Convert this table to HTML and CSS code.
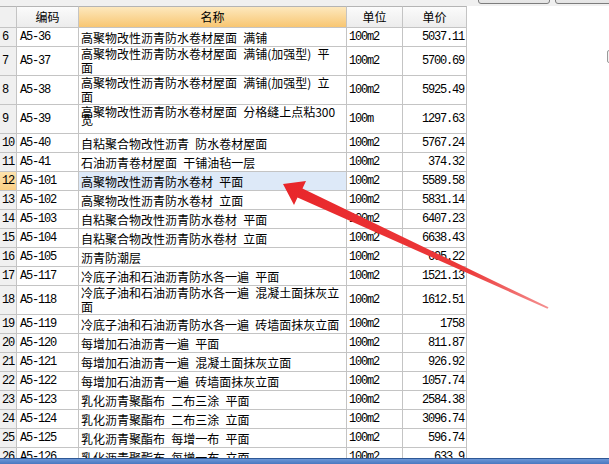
FILE: index.html
```html
<!DOCTYPE html>
<html lang="zh-CN">
<head>
<meta charset="utf-8">
<title>定额列表</title>
<link rel="stylesheet" href="styles.css">
</head>
<body>
<div class="topbar">
  <div class="tbtn"></div>
  <div class="tbtn wide"></div>
</div>
<div class="main">
  <div class="grid">
    <div class="h num"></div>
    <div class="h">编码</div>
    <div class="h sel">名称</div>
    <div class="h">单位</div>
    <div class="h">单价</div>

    <div class="c num m">6</div><div class="c code m">A5-36</div><div class="c name">高聚物改性沥青防水卷材屋面 满铺</div><div class="c unit m">100m2</div><div class="c price m">5037.11</div>

    <div class="c num m t2">7</div><div class="c code m t2">A5-37</div><div class="c name t2"><span class="ln">高聚物改性沥青防水卷材屋面 满铺(加强型) 平</span><span class="ln">面</span></div><div class="c unit m t2">100m2</div><div class="c price m t2">5700.69</div>

    <div class="c num m t2">8</div><div class="c code m t2">A5-38</div><div class="c name t2"><span class="ln">高聚物改性沥青防水卷材屋面 满铺(加强型) 立</span><span class="ln">面</span></div><div class="c unit m t2">100m2</div><div class="c price m t2">5925.49</div>

    <div class="c num m t2">9</div><div class="c code m t2">A5-39</div><div class="c name t2 top"><span class="ln tight">高聚物改性沥青防水卷材屋面 分格缝上点粘300</span><span class="ln tight">宽</span></div><div class="c unit m t2">100m</div><div class="c price m t2">1297.63</div>

    <div class="c num m">10</div><div class="c code m">A5-40</div><div class="c name">自粘聚合物改性沥青 防水卷材屋面</div><div class="c unit m">100m2</div><div class="c price m">5767.24</div>

    <div class="c num m">11</div><div class="c code m">A5-41</div><div class="c name">石油沥青卷材屋面 干铺油毡一层</div><div class="c unit m">100m2</div><div class="c price m">374.32</div>

    <div class="c num m cur">12</div><div class="c code m">A5-101</div><div class="c name active">高聚物改性沥青防水卷材 平面</div><div class="c unit m">100m2</div><div class="c price m">5589.58</div>

    <div class="c num m">13</div><div class="c code m">A5-102</div><div class="c name">高聚物改性沥青防水卷材 立面</div><div class="c unit m">100m2</div><div class="c price m">5831.14</div>

    <div class="c num m">14</div><div class="c code m">A5-103</div><div class="c name">自粘聚合物改性沥青防水卷材 平面</div><div class="c unit m">100m2</div><div class="c price m">6407.23</div>

    <div class="c num m">15</div><div class="c code m">A5-104</div><div class="c name">自粘聚合物改性沥青防水卷材 立面</div><div class="c unit m">100m2</div><div class="c price m">6638.43</div>

    <div class="c num m">16</div><div class="c code m">A5-105</div><div class="c name">沥青防潮层</div><div class="c unit m">100m2</div><div class="c price m">695.22</div>

    <div class="c num m">17</div><div class="c code m">A5-117</div><div class="c name">冷底子油和石油沥青防水各一遍 平面</div><div class="c unit m">100m2</div><div class="c price m">1521.13</div>

    <div class="c num m t2">18</div><div class="c code m t2">A5-118</div><div class="c name t2"><span class="ln">冷底子油和石油沥青防水各一遍 混凝土面抹灰立</span><span class="ln">面</span></div><div class="c unit m t2">100m2</div><div class="c price m t2">1612.51</div>

    <div class="c num m">19</div><div class="c code m">A5-119</div><div class="c name">冷底子油和石油沥青防水各一遍 砖墙面抹灰立面</div><div class="c unit m">100m2</div><div class="c price m">1758</div>

    <div class="c num m">20</div><div class="c code m">A5-120</div><div class="c name">每增加石油沥青一遍 平面</div><div class="c unit m">100m2</div><div class="c price m">811.87</div>

    <div class="c num m">21</div><div class="c code m">A5-121</div><div class="c name">每增加石油沥青一遍 混凝土面抹灰立面</div><div class="c unit m">100m2</div><div class="c price m">926.92</div>

    <div class="c num m">22</div><div class="c code m">A5-122</div><div class="c name">每增加石油沥青一遍 砖墙面抹灰立面</div><div class="c unit m">100m2</div><div class="c price m">1057.74</div>

    <div class="c num m">23</div><div class="c code m">A5-123</div><div class="c name">乳化沥青聚酯布 二布三涂 平面</div><div class="c unit m">100m2</div><div class="c price m">2584.38</div>

    <div class="c num m">24</div><div class="c code m">A5-124</div><div class="c name">乳化沥青聚酯布 二布三涂 立面</div><div class="c unit m">100m2</div><div class="c price m">3096.74</div>

    <div class="c num m">25</div><div class="c code m">A5-125</div><div class="c name">乳化沥青聚酯布 每增一布 平面</div><div class="c unit m">100m2</div><div class="c price m">596.74</div>

    <div class="c num m">26</div><div class="c code m">A5-126</div><div class="c name">乳化沥青聚酯布 每增一布 立面</div><div class="c unit m">100m2</div><div class="c price m">633.9</div>
  </div>
  <div class="side">
    <div class="sidebtn"></div>
  </div>
</div>
<div class="bottombar"></div>

<svg class="arrow" width="609" height="464" viewBox="0 0 609 464" xmlns="http://www.w3.org/2000/svg">
  <defs>
    <linearGradient id="ag" x1="283" y1="184" x2="548" y2="308" gradientUnits="userSpaceOnUse">
      <stop offset="0" stop-color="#e8262a"/>
      <stop offset="0.7" stop-color="#ec3a3a"/>
      <stop offset="1" stop-color="#f49090"/>
    </linearGradient>
  </defs>
  <polygon fill="url(#ag)" points="283,184 306,181 302.5,188.5 548.5,307.3 547.5,308.7 297.5,197.5 294,205"/>
</svg>
</body>
</html>
```

FILE: styles.css
```css
html, body {
  margin: 0;
  padding: 0;
}

body {
  width: 609px;
  height: 464px;
  overflow: hidden;
  background: #ffffff;
  display: flex;
  flex-direction: column;
  position: relative;
  font-family: "Noto Sans CJK SC", "Noto Sans", sans-serif;
  font-size: 12px;
  color: #000000;
}

.topbar {
  height: 6px;
  flex: none;
  background: #f0f0f0;
  display: flex;
  justify-content: flex-end;
  align-items: flex-end;
  gap: 5px;
  overflow: hidden;
  margin-right: -12px;
}

.tbtn {
  width: 72px;
  height: 20px;
  margin-bottom: 2px;
  box-sizing: border-box;
  border: 1px solid #7d7d7d;
  border-radius: 3px;
  background: linear-gradient(#f6f6f6, #e4e4e4);
}

.tbtn.wide {
  width: 66px;
}

.main {
  flex: 1;
  min-height: 0;
  display: flex;
  overflow: hidden;
}

.grid {
  width: 467px;
  flex: none;
  display: grid;
  grid-template-columns: 17px 62px 268px 56px 64px;
  align-content: start;
}

.h {
  height: 22px;
  box-sizing: border-box;
  border-top: 1px solid #b4b4b4;
  border-right: 1px solid #c4c4c4;
  border-bottom: 1px solid #c4c4c4;
  background: linear-gradient(#fbfbfb, #ececec);
  text-align: center;
  line-height: 20px;
  white-space: nowrap;
}

.h.sel {
  background: linear-gradient(#fde8bd, #f8c672);
}

.c {
  height: 19px;
  box-sizing: border-box;
  border-right: 1px solid #c4c4c4;
  border-bottom: 1px solid #c4c4c4;
  display: flex;
  align-items: center;
  white-space: nowrap;
  overflow: hidden;
}

.c.t2 {
  height: 29px;
}

.m {
  font-family: "Liberation Mono", "DejaVu Sans Mono", monospace;
  font-size: 12px;
  letter-spacing: -1.2px;
}

.num {
  background: #f0f0f0;
  padding-left: 2px;
}

.num.cur {
  background: linear-gradient(#fde3ad, #fbcf84);
}

.code {
  padding-left: 3px;
}

.name {
  padding-left: 2px;
  word-spacing: 3.5px;
}

.name.t2 {
  flex-direction: column;
  align-items: flex-start;
  justify-content: center;
  overflow: visible;
}

.name.active {
  background: #dde9f8;
}

.name.top {
  justify-content: flex-start;
  padding-top: 3px;
}

.ln {
  display: block;
  line-height: 14px;
  height: 14px;
}

.ln.tight {
  line-height: 8px;
  height: 8px;
}

.unit {
  padding-left: 2px;
}

.price {
  justify-content: flex-end;
  padding-right: 2px;
}

.side {
  flex: 1;
  display: flex;
  flex-direction: column;
  align-items: flex-end;
}

.sidebtn {
  width: 12px;
  height: 13px;
  margin-top: 44px;
  margin-right: -10px;
  box-sizing: border-box;
  border: 1px solid #9a9a9a;
  border-radius: 2px;
  background: #f2f2f2;
}

.bottombar {
  height: 6px;
  flex: none;
  box-sizing: border-box;
  border-top: 1px solid #2e5896;
  background: linear-gradient(#6b96d6, #4a78c0);
}

.arrow {
  position: absolute;
  left: 0;
  top: 0;
  pointer-events: none;
}
```
